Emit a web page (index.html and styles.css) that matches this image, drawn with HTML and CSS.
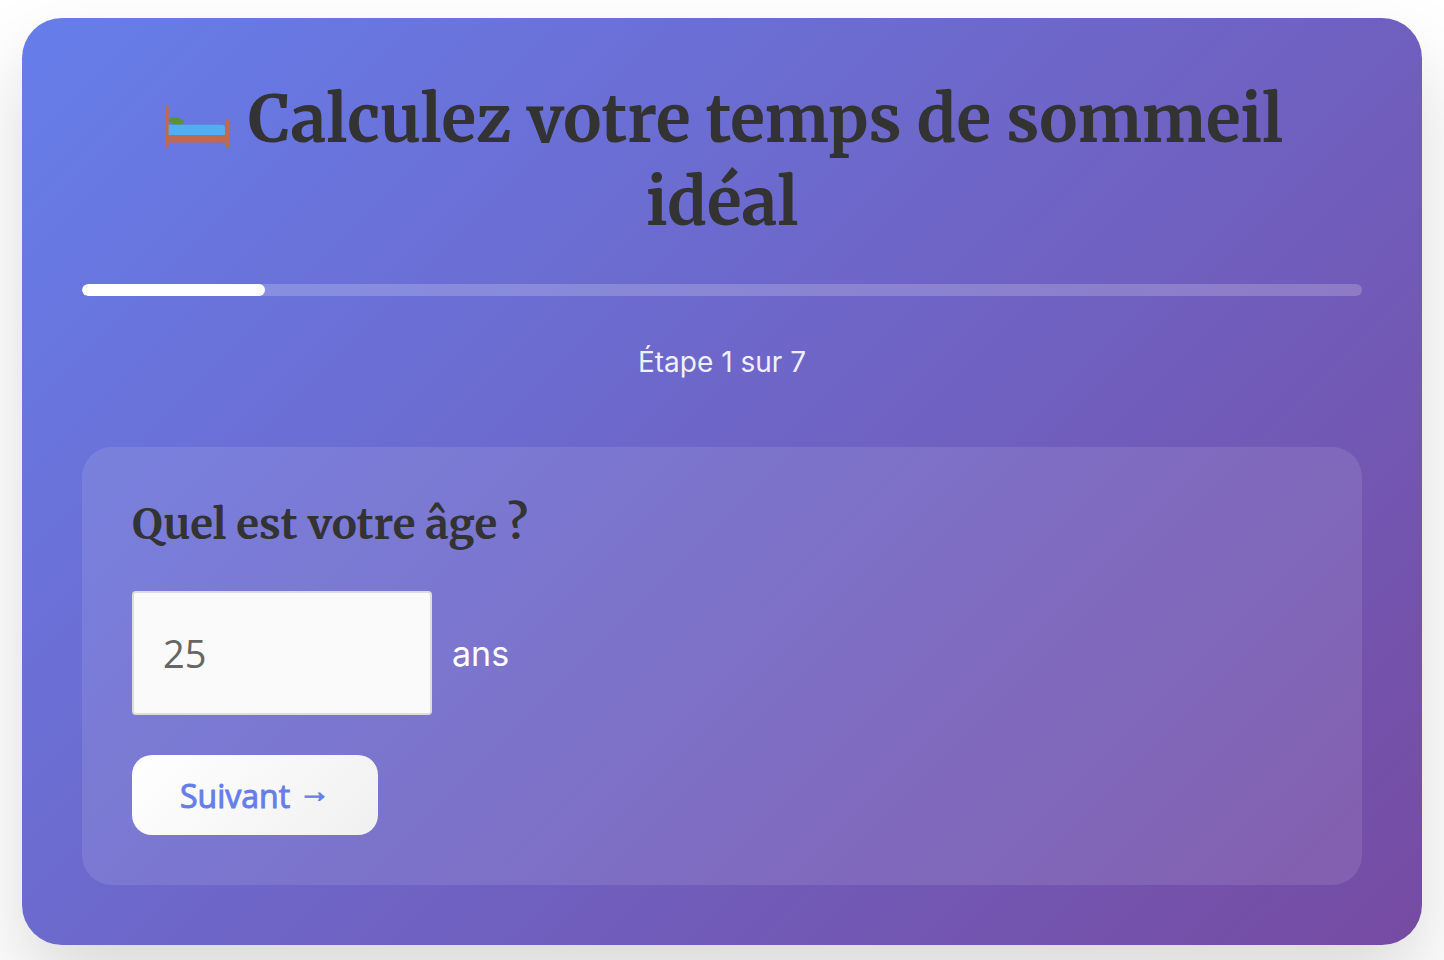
FILE: index.html
```html
<!DOCTYPE html>
<html lang="fr">
<head>
    <meta charset="UTF-8">
    <meta name="viewport" content="width=device-width, initial-scale=1.0">
    <title>Calculez votre temps de sommeil idéal</title>
    <link rel="stylesheet" href="styles.css">
</head>
<body>
    <main class="calculator">
        <h1 class="title">
            <svg class="bed" viewBox="0 0 64 42" aria-hidden="true">
                <ellipse cx="11.3" cy="16" rx="7.8" ry="3.6" transform="rotate(9 11.3 16)" fill="#5c913b"/>
                <path d="M3 31V19.700h54q3 0 3 3V31z" fill="#55acee"/>
                <path d="M0 1.800a1.800 1.800 0 0 1 3.600 0V30h56.800V16a1.800 1.800 0 0 1 3.600 0v26h-3.600v-4.500H3.600V42H0z" fill="#c1694f"/>
            </svg>
            Calculez votre temps de sommeil idéal
        </h1>
        <div class="progress">
            <div class="progress-bar"></div>
        </div>
        <p class="step-label">Étape 1 sur 7</p>
        <form class="step">
            <h2 class="question"><label for="age">Quel est votre âge ?</label></h2>
            <div class="field">
                <input class="age-input" type="text" inputmode="numeric" id="age" name="age" value="25">
                <span class="unit">ans</span>
            </div>
            <button class="next" type="button">Suivant <span class="arrow">→</span></button>
        </form>
    </main>
</body>
</html>
```

FILE: styles.css
```css
* {
    box-sizing: border-box;
}

body {
    min-height: 100vh;
    margin: 0;
    padding: 18px 22px 0;
    background: #fff;
    color: #fff;
    font-family: Inter, sans-serif;
    overflow: hidden;
}

.calculator {
    padding: 60px;
    border-radius: 40px;
    background: linear-gradient(135deg, #667eea 0%, #764ba2 100%);
    box-shadow: 0 40px 80px rgba(0, 0, 0, 0.15);
}

.title {
    margin: 0 0 40px;
    color: #333;
    font-family: Merriweather, "Liberation Serif", serif;
    font-size: 64px;
    font-weight: bold;
    line-height: 83px;
    text-align: center;
}

.bed {
    width: 72px;
    height: 42px;
    padding: 0 4px;
    vertical-align: -5px;
}

.progress {
    height: 12px;
    margin-bottom: 48px;
    border-radius: 6px;
    background: rgba(255, 255, 255, 0.2);
    overflow: hidden;
}

.progress-bar {
    width: 14.3%;
    height: 100%;
    border-radius: 6px;
    background: #fff;
}

.step-label {
    margin: 0 0 67px;
    font-size: 28px;
    line-height: 36px;
    text-align: center;
    opacity: 0.9;
}

.step {
    padding: 50px;
    border-radius: 30px;
    background: rgba(255, 255, 255, 0.1);
}

.question {
    margin: 0 0 40px;
    color: #333;
    font-family: Merriweather, "Liberation Serif", serif;
    font-size: 42px;
    font-weight: bold;
    line-height: 54px;
}

.field {
    display: flex;
    align-items: center;
    gap: 20px;
    margin-bottom: 40px;
}

.age-input {
    width: 300px;
    height: 124px;
    padding: 0 29px;
    border: 2px solid #ddd;
    border-radius: 4px;
    background: #fafafa;
    color: #666;
    font-family: "Open Sans", sans-serif;
    font-size: 38px;
}

.unit {
    font-size: 34px;
}

.next {
    display: block;
    height: 80px;
    padding: 0 48px;
    border: none;
    border-radius: 20px;
    background: linear-gradient(135deg, #fff, #f0f0f0);
    color: #667eea;
    font-family: "Open Sans", sans-serif;
    font-size: 32px;
    -webkit-text-stroke: 1px #667eea;
}

.arrow {
    font-family: "Liberation Sans", sans-serif;
    line-height: 0;
    vertical-align: 6px;
}
```
